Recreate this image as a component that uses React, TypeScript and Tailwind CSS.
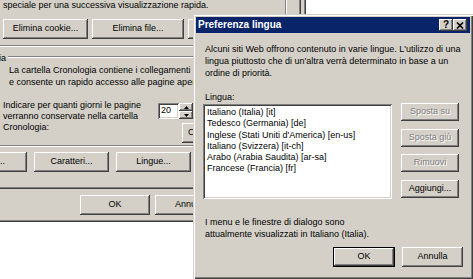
import type { ReactNode } from 'react';

const raised =
  'bg-[#d4d0c8] shadow-[inset_-1px_-1px_0_#404040,inset_1px_1px_0_#fff,inset_-2px_-2px_0_#808080,inset_2px_2px_0_#d4d0c8]';
const sunken =
  'bg-white shadow-[inset_1px_1px_0_#808080,inset_-1px_-1px_0_#fff,inset_2px_2px_0_#404040,inset_-2px_-2px_0_#d4d0c8]';

type BtnProps = {
  label?: ReactNode;
  className?: string;
  disabled?: boolean;
  isDefault?: boolean;
};

const Button = ({ label, className = '', disabled = false, isDefault = false }: BtnProps) => {
  if (isDefault) {
    return (
      <div className={`border border-black ${className}`}>
        <div className={`h-full w-full flex items-center justify-center ${raised}`}>{label}</div>
      </div>
    );
  }
  return (
    <div
      className={`flex items-center justify-center whitespace-nowrap overflow-hidden ${raised} ${
        disabled ? 'text-[#808080] [text-shadow:1px_1px_0_#fff]' : ''
      } ${className}`}
    >
      {label}
    </div>
  );
};

const TitleBtn = ({ children }: { children: ReactNode }) => (
  <div className={`w-[14px] h-[12px] flex items-center justify-center ${raised}`}>{children}</div>
);

const languages = [
  'Italiano (Italia) [it]',
  'Tedesco (Germania) [de]',
  "Inglese (Stati Uniti d'America) [en-us]",
  'Italiano (Svizzera) [it-ch]',
  'Arabo (Arabia Saudita) [ar-sa]',
  'Francese (Francia) [fr]',
];

export default function App() {
  return (
    <div className="relative w-[473px] h-[279px] overflow-hidden bg-white text-black text-[9px] font-['Liberation_Sans',Arial,sans-serif]">
      {/* Opzioni Internet (background window) */}
      <div className="absolute left-0 top-0 w-[306px] h-[222px] bg-[#d4d0c8] overflow-hidden flex flex-col shadow-[inset_-1px_-1px_0_#404040,inset_-2px_-2px_0_#808080]">
        {/* tab page */}
        <div className="w-[301px] h-[189px] shrink-0 flex flex-col shadow-[inset_-1px_-1px_0_#404040,inset_-2px_-2px_0_#808080]">
          {/* File temporanei Internet */}
          <div className="-ml-[5px] w-[292px] h-[47px] shrink-0 pl-[8px] flex flex-col shadow-[inset_-1px_-1px_0_#fff,inset_-2px_-2px_0_#808080]">
            <p className="-mt-[1px] leading-[12px] whitespace-nowrap">
              speciale per una successiva visualizzazione rapida.
            </p>
            <div className="mt-[8px] flex gap-[4px]">
              <Button label="Elimina cookie..." className="w-[85px] h-[20px] shrink-0" />
              <Button label="Elimina file..." className="w-[92px] h-[20px] shrink-0" />
              <Button className="w-[92px] h-[20px] shrink-0" />
            </div>
          </div>

          {/* Cronologia */}
          <div className="-ml-[5px] w-[292px] h-[100px] shrink-0 flex flex-col shadow-[inset_0_-1px_0_#fff,inset_0_-2px_0_#808080]">
            <div className="mt-[5px] h-[12px] flex items-start">
              <span className="-ml-[39px] w-[50px] shrink-0 text-right leading-[12px]">Cronologia</span>
              <div className="ml-[2px] mt-[4px] flex-1 h-[2px] border-t border-[#808080] border-b border-b-white" />
            </div>
            <div className="pl-[14px] leading-[12px] whitespace-nowrap">
              <p>La cartella Cronologia contiene i collegamenti</p>
              <p>e consente un rapido accesso alle pagine aperte di recente.</p>
            </div>
            <div className="mt-[12px] pl-[8px] flex">
              <div className="w-[155px] shrink-0 leading-[11px] whitespace-nowrap">
                <p>Indicare per quanti giorni le pagine</p>
                <p>verranno conservate nella cartella</p>
                <p>Cronologia:</p>
              </div>
              <div className="flex flex-col">
                <div className="mt-[3px] flex h-[16px]">
                  <div className={`w-[21px] h-full pl-[3px] flex items-center ${sunken}`}>20</div>
                  <div className="w-[14px] h-full flex flex-col">
                    <div className={`h-[8px] flex items-center justify-center ${raised}`}>
                      <svg width="5" height="3" viewBox="0 0 5 3">
                        <path d="M2.5 0 L5 3 L0 3 Z" fill="#000" />
                      </svg>
                    </div>
                    <div className={`h-[8px] flex items-center justify-center ${raised}`}>
                      <svg width="5" height="3" viewBox="0 0 5 3">
                        <path d="M0 0 L5 0 L2.5 3 Z" fill="#000" />
                      </svg>
                    </div>
                  </div>
                </div>
                <Button label="C" className="mt-[4px] ml-[24px] w-[100px] h-[20px] justify-start pl-[6px]" />
              </div>
            </div>
          </div>

          {/* Colori / Caratteri / Lingue */}
          <div className="mt-[5px] -ml-[48px] flex gap-[7px]">
            <Button label="Colori..." className="w-[75px] h-[20px] shrink-0" />
            <Button label="Caratteri..." className="w-[75px] h-[20px] shrink-0" />
            <Button label="Lingue..." className="w-[75px] h-[20px] shrink-0" />
            <Button className="w-[95px] h-[20px] shrink-0" />
          </div>
        </div>

        <div className="mt-[6px] ml-[80px] flex gap-[5px]">
          <Button label="OK" className="w-[70px] h-[20px] shrink-0" />
          <Button label="Annulla" className="w-[70px] h-[20px] shrink-0" />
          <Button className="w-[70px] h-[20px] shrink-0" />
        </div>
      </div>

      {/* Preferenza lingua (front dialog) */}
      <div className="absolute left-[193px] top-[14px] w-[280px] h-[265px] bg-[#d4d0c8] p-[3px] flex flex-col shadow-[inset_1px_1px_0_#d4d0c8,inset_2px_2px_0_#fff,inset_-1px_-1px_0_#404040,inset_-2px_-2px_0_#808080]">
        <div className="h-[16px] shrink-0 bg-[#0a246a] flex items-center pl-[2px] pr-[3px]">
          <span className="text-white font-bold text-[10px] leading-none">Preferenza lingua</span>
          <div className="ml-auto flex">
            <TitleBtn>
              <span className="font-bold text-[10px] leading-none">?</span>
            </TitleBtn>
            <TitleBtn>
              <svg width="8" height="7" viewBox="0 0 8 7">
                <path d="M1 0.5 L7 6.5 M7 0.5 L1 6.5" stroke="#000" strokeWidth="1.6" />
              </svg>
            </TitleBtn>
          </div>
        </div>

        <div className="mt-[10px] pl-[9px] leading-[12px] whitespace-nowrap">
          <p>Alcuni siti Web offrono contenuto in varie lingue. L'utilizzo di una</p>
          <p>lingua piuttosto che di un'altra verrà determinato in base a un</p>
          <p>ordine di priorità.</p>
        </div>

        <p className="mt-[12px] pl-[9px] leading-[12px]">Lingua:</p>

        <div className="mt-[1px] pl-[7px] flex">
          <div className={`w-[189px] h-[95px] shrink-0 pt-[3px] pl-[4px] leading-[11.3px] whitespace-nowrap ${sunken}`}>
            {languages.map((l) => (
              <p key={l}>{l}</p>
            ))}
          </div>
          <div className="ml-[9px] -mt-[1px] w-[58px] flex flex-col">
            <Button label="Sposta su" disabled className="h-[18px]" />
            <Button label="Sposta giù" disabled className="mt-[8px] h-[18px]" />
            <Button label="Rimuovi" disabled className="mt-[7px] h-[18px]" />
            <Button label="Aggiungi..." className="mt-[8px] h-[18px]" />
          </div>
        </div>

        <div className="mt-[17px] pl-[9px] leading-[12px] whitespace-nowrap">
          <p>I menu e le finestre di dialogo sono</p>
          <p>attualmente visualizzati in Italiano (Italia).</p>
        </div>

        <div className="mt-[7px] pr-[7px] flex justify-end gap-[7px]">
          <Button label="OK" isDefault className="w-[62px] h-[20px]" />
          <Button label="Annulla" className="w-[61px] h-[20px]" />
        </div>
      </div>
    </div>
  );
}
